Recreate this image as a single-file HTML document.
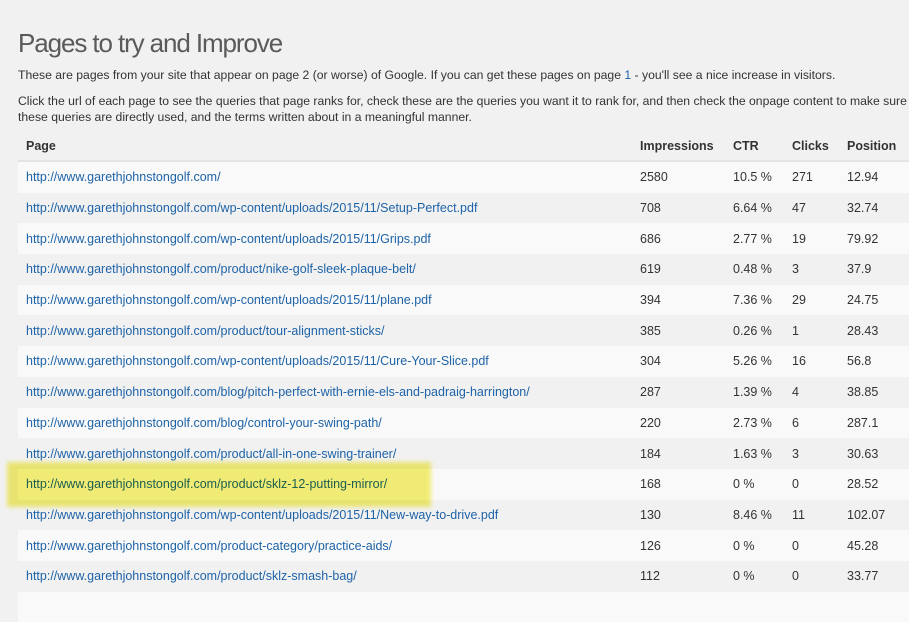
<!DOCTYPE html>
<html><head><style>
body{margin:0;background:#f1f1f1;font-family:"Liberation Sans",sans-serif;color:#444;width:909px;height:600px;overflow:hidden;position:relative}
h1{position:absolute;left:18px;top:28px;margin:0;font-size:26px;font-weight:normal;color:#5a5a5a;letter-spacing:-1.1px}
p{position:absolute;left:18px;margin:0;font-size:12.2px;line-height:16px;color:#333;white-space:nowrap}
table{position:absolute;left:18px;top:131px;width:900px;border-collapse:collapse;font-size:12.5px;table-layout:fixed}
th{text-align:left;font-weight:bold;height:29px;padding:0 8px;border-bottom:2px solid #e4e4e4;color:#333;white-space:nowrap}
td{height:30.7px;padding:0 8px;color:#333;white-space:nowrap}
tr:nth-child(odd) td{background:#f9f9f9}
td a{color:#1e63a8;text-decoration:none}
.hl{position:absolute;left:7px;top:462px;width:424px;height:45px;background:#f6f170;filter:blur(2px);opacity:.95}
</style></head><body>
<h1>Pages to try and Improve</h1>
<p style="top:67px">These are pages from your site that appear on page 2 (or worse) of Google. If you can get these pages on page <a style="color:#1e63a8">1</a> - you'll see a nice increase in visitors.</p>
<p style="top:93px">Click the url of each page to see the queries that page ranks for, check these are the queries you want it to rank for, and then check the onpage content to make sure<br>these queries are directly used, and the terms written about in a meaningful manner.</p>
<table>
<colgroup><col style="width:614px"><col style="width:93px"><col style="width:59px"><col style="width:55px"><col></colgroup>
<thead><tr><th>Page</th><th>Impressions</th><th>CTR</th><th>Clicks</th><th>Position</th></tr></thead>
<tbody>
<tr><td><a>http://www.garethjohnstongolf.com/</a></td><td>2580</td><td>10.5 %</td><td>271</td><td>12.94</td></tr>
<tr><td><a>http://www.garethjohnstongolf.com/wp-content/uploads/2015/11/Setup-Perfect.pdf</a></td><td>708</td><td>6.64 %</td><td>47</td><td>32.74</td></tr>
<tr><td><a>http://www.garethjohnstongolf.com/wp-content/uploads/2015/11/Grips.pdf</a></td><td>686</td><td>2.77 %</td><td>19</td><td>79.92</td></tr>
<tr><td><a>http://www.garethjohnstongolf.com/product/nike-golf-sleek-plaque-belt/</a></td><td>619</td><td>0.48 %</td><td>3</td><td>37.9</td></tr>
<tr><td><a>http://www.garethjohnstongolf.com/wp-content/uploads/2015/11/plane.pdf</a></td><td>394</td><td>7.36 %</td><td>29</td><td>24.75</td></tr>
<tr><td><a>http://www.garethjohnstongolf.com/product/tour-alignment-sticks/</a></td><td>385</td><td>0.26 %</td><td>1</td><td>28.43</td></tr>
<tr><td><a>http://www.garethjohnstongolf.com/wp-content/uploads/2015/11/Cure-Your-Slice.pdf</a></td><td>304</td><td>5.26 %</td><td>16</td><td>56.8</td></tr>
<tr><td><a>http://www.garethjohnstongolf.com/blog/pitch-perfect-with-ernie-els-and-padraig-harrington/</a></td><td>287</td><td>1.39 %</td><td>4</td><td>38.85</td></tr>
<tr><td><a>http://www.garethjohnstongolf.com/blog/control-your-swing-path/</a></td><td>220</td><td>2.73 %</td><td>6</td><td>287.1</td></tr>
<tr><td><a>http://www.garethjohnstongolf.com/product/all-in-one-swing-trainer/</a></td><td>184</td><td>1.63 %</td><td>3</td><td>30.63</td></tr>
<tr><td><a>http://www.garethjohnstongolf.com/product/sklz-12-putting-mirror/</a></td><td>168</td><td>0 %</td><td>0</td><td>28.52</td></tr>
<tr><td><a>http://www.garethjohnstongolf.com/wp-content/uploads/2015/11/New-way-to-drive.pdf</a></td><td>130</td><td>8.46 %</td><td>11</td><td>102.07</td></tr>
<tr><td><a>http://www.garethjohnstongolf.com/product-category/practice-aids/</a></td><td>126</td><td>0 %</td><td>0</td><td>45.28</td></tr>
<tr><td><a>http://www.garethjohnstongolf.com/product/sklz-smash-bag/</a></td><td>112</td><td>0 %</td><td>0</td><td>33.77</td></tr>
<tr><td>&nbsp;</td><td></td><td></td><td></td><td></td></tr>
</tbody></table>
<div class="hl" style="mix-blend-mode:multiply"></div>
</body></html>
